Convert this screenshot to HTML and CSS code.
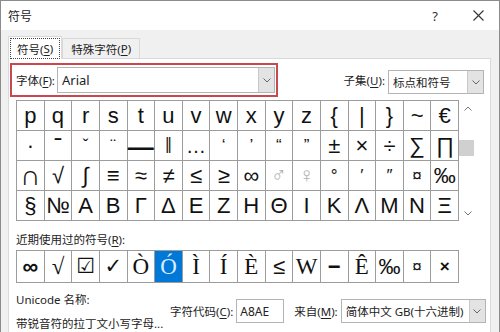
FILE: index.html
```html
<!DOCTYPE html>
<html lang="zh-CN">
<head>
  <meta charset="UTF-8">
  <meta name="viewport" content="width=device-width, initial-scale=1.0">
  <title>符号</title>
  <link rel="stylesheet" href="styles.css">
</head>
<body>
  <div class="window">
    <header class="titlebar">
      <div class="title">符号</div>
      <div class="help">?</div>
      <div class="close">
        <svg width="11" height="11" viewBox="0 0 11 11"><path d="M0.5 0.5l10 10M10.5 0.5l-10 10" stroke="#333" stroke-width="1.1" fill="none"/></svg>
      </div>
    </header>
    <div class="dialog">
      <div class="tabs">
        <div class="tab active"><span class="focus">符号(<u>S</u>)</span></div>
        <div class="tab">特殊字符(<u>P</u>)</div>
      </div>
      <main class="panel">
        <div class="font-row">
          <div class="font-box">
            <span class="label">字体(<u>F</u>):</span>
            <div class="select font-select">
              <span class="value latin">Arial</span>
              <span class="drop"><svg width="8" height="5" viewBox="0 0 8 5"><path d="M0.5 0.5l3.5 3.5 3.5-3.5" stroke="#666" fill="none"/></svg></span>
            </div>
          </div>
          <span class="label subset-label">子集(<u>U</u>):</span>
          <div class="select subset-select">
            <span class="value">标点和符号</span>
            <span class="drop"><svg width="8" height="5" viewBox="0 0 8 5"><path d="M0.5 0.5l3.5 3.5 3.5-3.5" stroke="#666" fill="none"/></svg></span>
          </div>
        </div>

        <div class="chart">
          <div class="grid symbols">
            <div>p</div><div>q</div><div>r</div><div>s</div><div>t</div><div>u</div><div>v</div><div>w</div>
            <div>x</div><div>y</div><div>z</div><div>{</div><div>|</div><div>}</div><div>~</div><div>€</div>

            <div>·</div><div class="bold">ˉ</div><div class="small">ˇ</div><div class="small">¨</div><div class="dash">—</div><div><span class="thin">‖</span></div><div class="low">…</div><div class="small">‘</div>
            <div class="small">’</div><div class="small">“</div><div class="small">”</div><div>±</div><div>×</div><div>÷</div><div>∑</div><div>∏</div>

            <div class="big">∩</div><div>√</div><div>∫</div><div>≡</div><div>≈</div><div>≠</div><div>≤</div><div>≥</div>
            <div>∞</div><div class="faint">♂</div><div class="faint">♀</div><div class="small">°</div><div class="small">′</div><div class="small">″</div><div class="small">¤</div><div>‰</div>

            <div>§</div><div>№</div><div>Α</div><div>Β</div><div>Γ</div><div>Δ</div><div>Ε</div><div>Ζ</div>
            <div>Η</div><div>Θ</div><div>Ι</div><div>Κ</div><div>Λ</div><div>Μ</div><div>Ν</div><div>Ξ</div>
          </div>
          <div class="scrollbar">
            <svg width="8" height="5" viewBox="0 0 8 5"><path d="M0.5 4.5l3.5-3.5 3.5 3.5" stroke="#777" fill="none"/></svg>
            <div class="thumb"></div>
            <svg class="down" width="8" height="5" viewBox="0 0 8 5"><path d="M0.5 0.5l3.5 3.5 3.5-3.5" stroke="#777" fill="none"/></svg>
          </div>
        </div>

        <div class="label recent-label">近期使用过的符号(<u>R</u>):</div>
        <div class="grid recent">
          <div class="bold">∞</div><div class="serif">√</div><div class="sym">☑</div><div class="sym">✓</div>
          <div class="serif">Ò</div><div class="serif selected">Ó</div><div class="serif">Ì</div><div class="serif">Í</div>
          <div class="serif">È</div><div>≤</div><div class="serif">W</div><div class="bold">−</div>
          <div class="serif">Ê</div><div>‰</div><div class="small">¤</div><div class="small bold">×</div>
        </div>

        <div class="info">
          <div class="names">
            <div class="label">Unicode 名称:</div>
            <div class="label">带锐音符的拉丁文小写字母...</div>
          </div>
          <div class="code">
            <span class="label">字符代码(<u>C</u>):</span>
            <div class="input latin">A8AE</div>
            <span class="label from-label">来自(<u>M</u>):</span>
            <div class="select from-select">
              <span class="value">简体中文 GB(十六进制)</span>
              <span class="drop"><svg width="8" height="5" viewBox="0 0 8 5"><path d="M0.5 0.5l3.5 3.5 3.5-3.5" stroke="#666" fill="none"/></svg></span>
            </div>
          </div>
        </div>
      </main>
    </div>
  </div>
</body>
</html>
```

FILE: styles.css
```css
* {
  margin: 0;
  padding: 0;
  box-sizing: border-box;
}
body {
  width: 500px;
  height: 332px;
  overflow: hidden;
  background: #f0f0f0;
  font-family: "Noto Sans", "Noto Sans CJK SC", sans-serif;
  font-size: 11.5px;
  color: #222;
}
u {
  text-decoration: underline;
  text-underline-offset: 2px;
}
.label {
  white-space: nowrap;
}
.window {
  height: 332px;
  border: 1px solid #8c8c8c;
  border-bottom: none;
  background: #f0f0f0;
}
.titlebar {
  display: flex;
  align-items: center;
  height: 29px;
  background: #fff;
  padding: 0 0 0 7px;
}
.title {
  margin-right: auto;
  font-size: 12px;
  color: #222;
}
.help {
  width: 44px;
  text-align: center;
  font-size: 13px;
  color: #333;
}
.close {
  display: flex;
  align-items: center;
  justify-content: center;
  width: 42px;
}
.dialog {
  padding: 6px 0 0 7px;
}

/* tabs */
.tabs {
  display: flex;
  align-items: flex-end;
  height: 23px;
  margin-bottom: -1px;
}
.tab {
  height: 20px;
  margin-bottom: 1px;
  padding: 0 8px;
  display: flex;
  align-items: center;
  border: 1px solid #d9d9d9;
  border-bottom: none;
  background: #f0f0f0;
  color: #222;
  white-space: nowrap;
}
.tab.active {
  position: relative;
  z-index: 1;
  height: 23px;
  margin-bottom: 0;
  padding: 1px 1px 0;
  background: #fff;
}
.focus {
  display: flex;
  align-items: center;
  height: 100%;
  padding: 0 6px;
  border: 1px dotted #444;
}

.panel {
  width: 483px;
  height: 280px;
  background: #fff;
  border: 1px solid #d9d9d9;
  padding: 4px 6px 0 1px;
}

/* font + subset row */
.font-row {
  display: flex;
  align-items: center;
  height: 34px;
}
.font-box {
  display: flex;
  align-items: center;
  width: 268px;
  height: 34px;
  border: 2px solid #c9474f;
  padding: 0 1px 0 4px;
  gap: 2px;
}
.select {
  display: flex;
  align-items: center;
  height: 24px;
  border: 1px solid #b4b4b4;
  background: #fff;
}
.select .value {
  flex: 1;
  padding-left: 4px;
  white-space: nowrap;
  overflow: hidden;
}
.latin {
  font-family: "Noto Sans", "Liberation Sans", sans-serif;
  font-size: 13px;
}
.drop {
  display: flex;
  align-items: center;
  justify-content: center;
  width: 16px;
  height: 100%;
  background: #e3e3e3;
  border-left: 1px solid #c8c8c8;
}
.font-select {
  flex: 1;
  height: 26px;
}
.subset-label {
  margin-left: auto;
  margin-right: 3px;
}
.subset-select {
  width: 96px;
  margin-top: 4px;
}

/* character grids */
.chart {
  display: flex;
  margin: 3px 0 0 6px;
}
.grid {
  display: grid;
  grid-template-columns: repeat(16, 1fr);
  gap: 1px;
  width: 443px;
  background: #9c9c9c;
  border: 1px solid #9c9c9c;
  font-family: "Liberation Sans", "DejaVu Sans", sans-serif;
  font-size: 22px;
  color: #111;
}
.grid > div {
  display: flex;
  align-items: center;
  justify-content: center;
  background: #fff;
  height: 29px;
  line-height: 1;
}
.grid .small {
  font-size: 17px;
}
.grid .bold {
  font-weight: bold;
}
.thin {
  display: inline-block;
  font-weight: 300;
  transform: scaleX(0.7);
}
.grid .big {
  font-size: 28px;
}
.grid .dash {
  font-size: 26px;
  font-weight: bold;
  padding-top: 3px;
}
.grid .low {
  align-items: flex-end;
  padding-bottom: 4px;
  font-size: 20px;
}
.grid .faint {
  color: #b0b0b0;
  font-family: "DejaVu Sans", sans-serif;
  font-weight: 300;
  font-size: 21px;
}
.scrollbar {
  display: flex;
  flex-direction: column;
  align-items: center;
  width: 19px;
  padding: 6px 2px 0 0;
  background: #fff;
}
.thumb {
  width: 15px;
  height: 16px;
  margin: 29px 0 0 -2px;
  background: #d0d0d0;
}
.scrollbar .down {
  margin-top: auto;
  margin-bottom: 5px;
}

.recent-label {
  margin: 11px 0 0 6px;
  line-height: 16px;
}
.recent {
  margin: 2px 0 0 6px;
}
.recent > div {
  height: 31px;
}
.recent .serif {
  font-family: "Liberation Serif", serif;
  font-size: 23px;
}
.recent .sym {
  font-family: "DejaVu Sans", sans-serif;
  font-size: 21px;
  font-weight: bold;
}
.recent .selected {
  background: #0078d7;
  color: #d8ecff;
}

/* bottom info */
.info {
  display: flex;
  margin: 9px 0 0 6px;
}
.names {
  display: flex;
  flex-direction: column;
  gap: 8px;
  width: 154px;
  flex-shrink: 0;
  line-height: 16px;
}
.code {
  display: flex;
  align-items: center;
  height: 24px;
  margin-top: 7px;
}
.input {
  width: 48px;
  height: 24px;
  margin-left: 3px;
  padding: 3px 0 0 3px;
  border: 1px solid #b4b4b4;
  background: #fff;
  font-size: 12px;
  flex-shrink: 0;
}
.from-label {
  margin: 0 3px 0 10px;
}
.from-select {
  width: 145px;
  flex-shrink: 0;
}
```
